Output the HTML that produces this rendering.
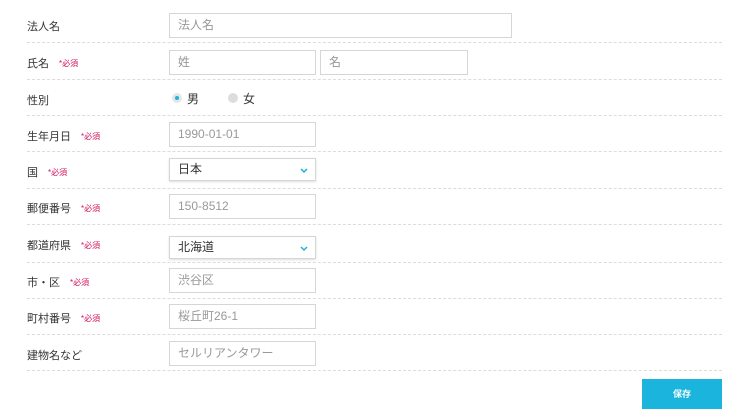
<!DOCTYPE html>
<html><head><meta charset="utf-8"><style>
*{margin:0;padding:0;box-sizing:border-box}
body{width:750px;height:420px;background:#fff;position:relative;font-family:"Liberation Sans","Noto Sans CJK JP",sans-serif;font-size:11px;color:#333;overflow:hidden}
.l{position:absolute;left:27px;font-size:11px;color:#333;line-height:14px}
.r{color:#d0105a;font-size:8px;margin-left:10px;vertical-align:middle}
.sep{position:absolute;left:27px;width:695px;border-top:1px dashed #dcdcdc}
.in{position:absolute;height:25px;border:1px solid #d6d6d6;background:#fff;color:#999;padding-left:8px;line-height:23px;font-size:12px}
.sel{color:#333;box-shadow:0 1px 2px #ddd}
.chev{position:absolute;right:7px;top:5px}
.btn{position:absolute;left:642px;top:379px;width:80px;height:30px;background:#1ab4dc;color:#fff;font-size:9px;font-weight:bold;text-align:center;line-height:30px}
.rad{position:absolute;width:10px;height:10px;border-radius:50%;background:#ddd}
</style></head><body>
<div class="l" style="top:20px">法人名</div>
<div class="in" style="left:169px;top:13px;width:343px">法人名</div>
<div class="sep" style="top:42px"></div>
<div class="l" style="top:57px">氏名<span class="r">*必須</span></div>
<div class="in" style="left:169px;top:50px;width:147px">姓</div>
<div class="in" style="left:320px;top:50px;width:148px">名</div>
<div class="sep" style="top:79px"></div>
<div class="l" style="top:94px">性別</div>
<div class="rad" style="left:172px;top:93px;background:#e6e6e6"><div style="position:absolute;left:3px;top:3px;width:4px;height:4px;border-radius:50%;background:#1ab4dc"></div></div>
<div style="position:absolute;left:187px;top:90px;font-size:12px">男</div>
<div class="rad" style="left:228px;top:93px"></div>
<div style="position:absolute;left:243px;top:90px;font-size:12px">女</div>
<div class="sep" style="top:115px"></div>
<div class="l" style="top:130px">生年月日<span class="r">*必須</span></div>
<div class="in" style="left:169px;top:122px;width:147px">1990-01-01</div>
<div class="sep" style="top:151px"></div>
<div class="l" style="top:166px">国<span class="r">*必須</span></div>
<div class="in sel" style="left:169px;top:158px;width:147px;height:23px;line-height:21px">日本<svg class="chev" width="8" height="8" viewBox="0 0 8 8" style="top:8px"><path d="M1 2l3 3 3-3" stroke="#1ab4dc" stroke-width="1.5" fill="none"/></svg></div>
<div class="sep" style="top:188px"></div>
<div class="l" style="top:202px">郵便番号<span class="r">*必須</span></div>
<div class="in" style="left:169px;top:194px;width:147px">150-8512</div>
<div class="sep" style="top:224px"></div>
<div class="l" style="top:239px">都道府県<span class="r">*必須</span></div>
<div class="in sel" style="left:169px;top:236px;width:147px;height:23px;line-height:21px">北海道<svg class="chev" width="8" height="8" viewBox="0 0 8 8" style="top:8px"><path d="M1 2l3 3 3-3" stroke="#1ab4dc" stroke-width="1.5" fill="none"/></svg></div>
<div class="sep" style="top:262px"></div>
<div class="l" style="top:276px">市・区<span class="r">*必須</span></div>
<div class="in" style="left:169px;top:268px;width:147px">渋谷区</div>
<div class="sep" style="top:298px"></div>
<div class="l" style="top:312px">町村番号<span class="r">*必須</span></div>
<div class="in" style="left:169px;top:304px;width:147px">桜丘町26-1</div>
<div class="sep" style="top:334px"></div>
<div class="l" style="top:349px">建物名など</div>
<div class="in" style="left:169px;top:341px;width:147px">セルリアンタワー</div>
<div class="sep" style="top:370px"></div>
<div class="btn">保存</div>
</body></html>
